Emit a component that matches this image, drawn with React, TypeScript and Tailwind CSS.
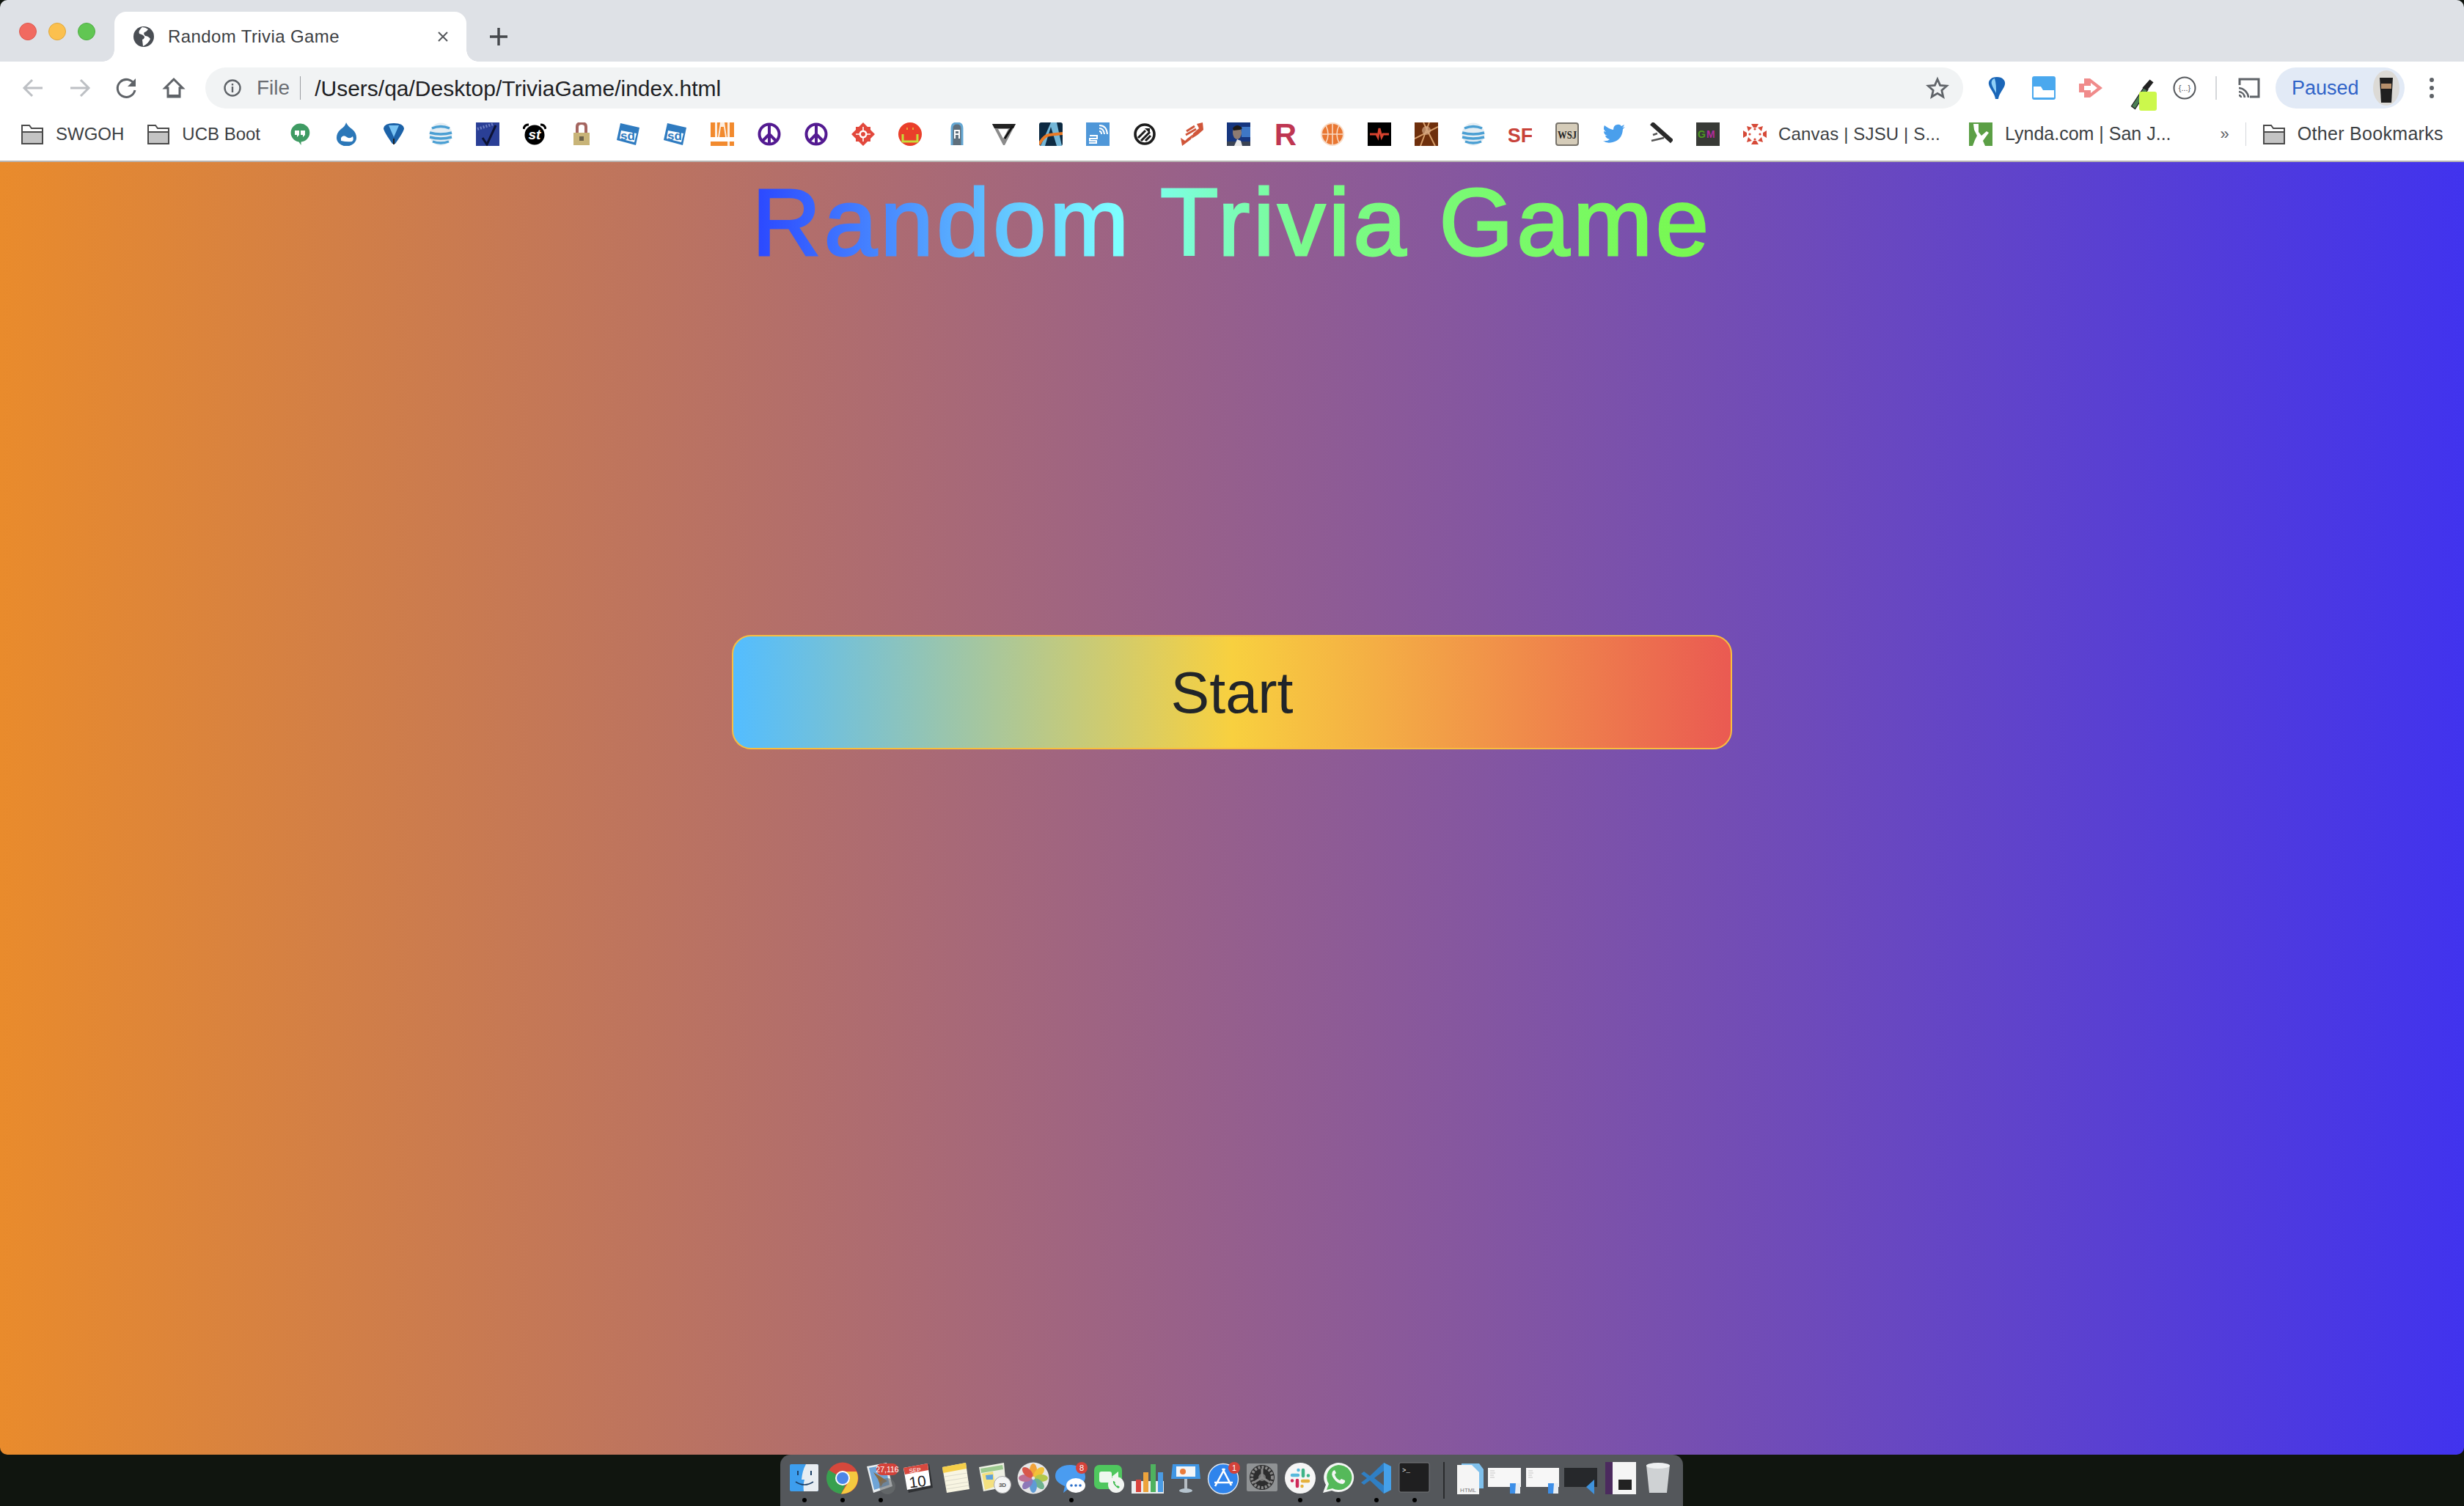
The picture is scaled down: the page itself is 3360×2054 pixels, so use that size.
import { ReactNode } from "react";

const Ico = ({ children, size = 32 }: { children: ReactNode; size?: number }) => (
  <svg viewBox="0 0 32 32" width={size} height={size} className="shrink-0">
    {children}
  </svg>
);

const Peace = () => (
  <Ico>
    <circle cx="16" cy="16" r="13.5" fill="none" stroke="#531a91" strokeWidth="4" />
    <path d="M16 3v26M16 16 6 26M16 16l10 10" stroke="#531a91" strokeWidth="4" fill="none" />
  </Ico>
);

const Att = () => (
  <Ico>
    <circle cx="16" cy="16" r="15.5" fill="#e4edf3" />
    <path d="M4 8q12-5 24 0M1 14q15 4 30 0M1 20q15 4 30 0M5 26q11 4 22 0" stroke="#4a9fd3" strokeWidth="3.4" fill="none" />
  </Ico>
);

const Sd = () => (
  <Ico>
    <path d="M5 1 31 7 26 31 0 24z" fill="#2f7bc0" />
    <path d="M6 11 27 15 24 27 4 22z" fill="#fff" />
    <text x="5" y="24" fontSize="17" fontWeight="700" fill="#2f7bc0" fontFamily="Liberation Sans, sans-serif">sd</text>
  </Ico>
);

const Balloon = () => (
  <Ico>
    <path d="M2 8Q3 1 16 1t14 7q0 4-12 21h-4Q2 12 2 8z" fill="#1c62a8" />
    <path d="M9 4h14L16 20z" fill="#79c4f4" />
    <path d="M15 22h2v8h-2z" fill="#222" />
  </Ico>
);

const Pin = () => (
  <Ico>
    <path d="M16 1c8 0 12 5 11 10-1 6-8 12-9 20h-4C13 23 6 17 5 11 4 6 8 1 16 1z" fill="#1a66b8" />
    <path d="M13 3c-4 1-5 5-4 8 1 4 4 8 6 12 0-7 0-14-2-20z" fill="#8fd0f7" />
  </Ico>
);

const Folder = () => (
  <svg viewBox="0 0 32 32" width="32" height="32" className="shrink-0">
    <path d="M2 4h10l3 4h15v21H2z" fill="#fff" stroke="#4a4a4a" strokeWidth="2" />
    <path d="M3 13h26v15H3z" fill="#c4c4c4" />
    <path d="M2 13h28" stroke="#4a4a4a" strokeWidth="2" />
  </svg>
);

const favicons = [
  <Ico key="hangouts">
    <path d="M16 1.5a12.5 12.5 0 0 1 1.5 25V31l-3-4.6A12.5 12.5 0 0 1 16 1.5z" fill="#3f9b63" />
    <path d="M9 11h6v6l-3 3v-3H9zM17 11h6v6l-3 3v-3h-3z" fill="#fff" />
  </Ico>,
  <Ico key="drupal">
    <path d="M15 0q2 5 8 9 6 5 6 12a13 11 0 0 1-27 0q0-7 6-12 6-4 7-9z" fill="#2b77b8" />
    <path d="M8 21q3-5 8-1 4 3 8-1 2 5-1 7-7 1-15-1z" fill="#fff" />
  </Ico>,
  <Balloon key="balloon" />,
  <Att key="att" />,
  <Ico key="check">
    <rect width="32" height="32" fill="#2a3f96" />
    <path d="M2 9 24 2" stroke="#6d7ec2" strokeWidth="4" strokeDasharray="2 2" />
    <path d="M9 21l6 9L27 4" stroke="#0c1233" strokeWidth="3" fill="none" />
  </Ico>,
  <Ico key="st">
    <circle cx="16" cy="17" r="13.5" fill="#000" />
    <path d="M1 9q1-6 7-6M31 9q-1-6-7-6" stroke="#000" strokeWidth="3" fill="none" />
    <text x="16" y="23" textAnchor="middle" fontSize="19" fontWeight="700" fontStyle="italic" fill="#fff" fontFamily="Liberation Sans, sans-serif">st</text>
  </Ico>,
  <Ico key="lock">
    <path d="M10 14V6q0-5 6-5t6 5v8" stroke="#a4655f" strokeWidth="4" fill="none" />
    <rect x="5" y="14" width="22" height="17" fill="#c8b478" />
    <rect x="13" y="19" width="6" height="6" fill="#6c624a" />
  </Ico>,
  <Sd key="sd1" />,
  <Sd key="sd2" />,
  <Ico key="ai">
    <rect width="32" height="32" fill="#f28a2e" />
    <path d="M6 0h3v20H6zM13 0h6l3 20h-2L18 6h-4l-2 14h-2zM23 0h3v32h-3z" fill="#fff" opacity=".85" />
    <path d="M0 20h32v6H0z" fill="#fff" />
  </Ico>,
  <Peace key="peace1" />,
  <Peace key="peace2" />,
  <Ico key="target">
    <path d="M16 0l6 6h4v4l6 6-6 6v4h-4l-6 6-6-6H6v-4l-6-6 6-6V6h4z" fill="#e2483c" />
    <circle cx="16" cy="16" r="5.5" fill="#fff" />
    <path d="M16 6v20M6 16h20" stroke="#fff" strokeWidth="1.6" />
    <circle cx="16" cy="16" r="3" fill="#e2483c" />
  </Ico>,
  <Ico key="smile">
    <circle cx="16" cy="16" r="16" fill="#ea3f2a" />
    <path d="M6 16v10h20V16" stroke="#c7dc3a" strokeWidth="3" fill="none" />
    <path d="M12 7v3M20 7v3" stroke="#e9a23a" strokeWidth="2" />
  </Ico>,
  <Ico key="tower">
    <path d="M9 31V8q0-7 7-7t7 7v23" fill="#5f6f7c" stroke="#65a8d4" strokeWidth="3" />
    <path d="M13 22V11h6v5h-6M19 16v6" stroke="#fff" strokeWidth="2" fill="none" />
  </Ico>,
  <Ico key="v">
    <path d="M0 2h32L17 31h-2z" fill="#8b8b8b" />
    <path d="M8 9h14l-7 13z" fill="#fff" />
    <path d="M0 2h32l-3 6H3z" fill="#222" />
    <path d="M28 5 17 22" stroke="#111" strokeWidth="3" />
  </Ico>,
  <Ico key="arch">
    <rect width="32" height="32" rx="3" fill="#0d2a42" />
    <path d="M16 0h8l7 32H24L16 6 8 32H2z" fill="#74b7d8" />
    <path d="M0 30q6-12 14-13t18-2" stroke="#ea7a26" strokeWidth="4" fill="none" />
  </Ico>,
  <Ico key="ewifi">
    <rect width="32" height="32" fill="#4f97d8" />
    <path d="M5 18h10v4H5v3h9v3H4M18 4q10 0 11 12M18 8q6 0 7 8M18 12q3 0 3 4" stroke="#fff" strokeWidth="2" fill="none" />
  </Ico>,
  <Ico key="pitchfork">
    <circle cx="16" cy="16" r="13" fill="#fff" stroke="#1c1c1c" strokeWidth="3.6" />
    <path d="M7 21 17 11M11 25 23 13M17 25l7-7" stroke="#1c1c1c" strokeWidth="3" />
    <path d="M16 8h7v7z" fill="#1c1c1c" />
  </Ico>,
  <Ico key="arrows">
    <path d="M1 21l2 11 12-9 3-7-8 6-3 3zM31 0l1 10-8 7-8 5 2-7 8-7-3-6z" fill="#d0563a" />
    <path d="M9 12l11-7M8 17l14-8" stroke="#d0563a" strokeWidth="3" />
  </Ico>,
  <Ico key="man">
    <rect width="32" height="32" fill="#16367f" />
    <rect x="20" y="6" width="12" height="14" fill="#3e77c6" />
    <path d="M0 26h32v6H0z" fill="#3a4354" />
    <ellipse cx="14" cy="14" rx="6" ry="9" fill="#8d7b72" />
    <path d="M8 8q6-8 13 0l-3 2-9 1z" fill="#1d1a18" />
    <path d="M10 32l4-9 5 2 2 7z" fill="#e8e8e8" />
  </Ico>,
  <svg key="r" viewBox="0 0 32 32" width="32" height="32" className="shrink-0 overflow-visible">
    <text x="16" y="31" textAnchor="middle" fontSize="42" fontWeight="700" fill="#bf3652" fontFamily="Liberation Sans, sans-serif">R</text>
  </svg>,
  <Ico key="basket">
    <circle cx="16" cy="16" r="15" fill="#e97732" stroke="#f8dcc8" strokeWidth="2" />
    <path d="M1 16h30M16 1v30M7 4q6 12 0 24M25 4q-6 12 0 24" stroke="#f9d9c3" strokeWidth="1.6" fill="none" />
  </Ico>,
  <Ico key="pulse">
    <rect width="32" height="32" fill="#000" />
    <path d="M3 16h9l2 4 2-12 3 12 2-4h8" stroke="#d8432f" strokeWidth="3" fill="none" />
  </Ico>,
  <Ico key="brown">
    <rect width="32" height="32" fill="#6e2f0c" />
    <path d="M20 0 8 32M12 0l16 32M0 22 32 6" stroke="#d49b68" strokeWidth="2" />
    <circle cx="16" cy="11" r="6" fill="#d6a986" opacity=".7" />
  </Ico>,
  <Att key="att2" />,
  <svg key="sf" viewBox="0 0 32 32" width="32" height="32" className="shrink-0">
    <text x="16" y="27" textAnchor="middle" fontSize="27" fontWeight="700" fill="#c8423a" fontFamily="Liberation Sans, sans-serif">SF</text>
  </svg>,
  <svg key="wsj" viewBox="0 0 32 32" width="32" height="32" className="shrink-0">
    <rect x="1" y="1" width="30" height="30" rx="3" fill="#d5ccb9" stroke="#77736b" strokeWidth="2" />
    <text x="16" y="22" textAnchor="middle" fontSize="14" fontWeight="700" fill="#222" fontFamily="Liberation Serif, serif" textLength="26" lengthAdjust="spacingAndGlyphs">WSJ</text>
  </svg>,
  <Ico key="twitter">
    <path d="M31 6q-2 1-4 1 2-1 3-4-2 1-4 2-2-3-6-2-5 1-5 7Q9 9 3 4q-3 5 2 9l-3-1q0 5 5 6H4q1 4 6 5-3 3-9 2 5 4 13 2 13-3 14-18z" fill="#4a9fec" />
  </Ico>,
  <Ico key="pen">
    <path d="M3 1 31 26" stroke="#2a2a2a" strokeWidth="6" />
    <path d="M3 25 20 21M5 17l6-2" stroke="#555" strokeWidth="2.6" />
  </Ico>,
  <svg key="gm" viewBox="0 0 32 32" width="32" height="32" className="shrink-0">
    <rect width="32" height="32" fill="#383a36" />
    <text x="2" y="21" fontSize="14" fontWeight="700" fill="#4e9a22" fontFamily="Liberation Sans, sans-serif">G</text>
    <text x="14" y="21" fontSize="14" fontWeight="700" fill="#b12b9c" fontFamily="Liberation Sans, sans-serif">M</text>
  </svg>,
  <Ico key="canvas">
    <path d="M11 2h10l-3 5h-4zM11 30h10l-3-5h-4zM0 11v10l5-3v-4zM32 11v10l-5-3v-4zM5 5l7 2-5 5zM27 5l-7 2 5 5zM5 27l7-2-5-5zM27 27l-7-2 5-5z" fill="#d64a38" />
    <circle cx="16" cy="9" r="1.6" fill="#d64a38" />
    <circle cx="16" cy="23" r="1.6" fill="#d64a38" />
    <circle cx="9" cy="16" r="1.6" fill="#d64a38" />
    <circle cx="23" cy="16" r="1.6" fill="#d64a38" />
  </Ico>,
];

const DockBox = ({ children }: { children: ReactNode }) => (
  <svg viewBox="0 0 44 44" width="44" height="44" className="overflow-visible">
    {children}
  </svg>
);

const sans = "Liberation Sans, sans-serif";

const dockApps: { key: string; dot?: boolean; icon: ReactNode }[] = [
  {
    key: "finder",
    dot: true,
    icon: (
      <DockBox>
        <rect x="2" y="3" width="39" height="37" rx="2" fill="#3d9eee" />
        <path d="M24 3h15a2 2 0 0 1 2 2v33a2 2 0 0 1-2 2H21q-1-9 1-16h-4q1-12 6-21z" fill="#e8edf2" />
        <path d="M13 12v6M31 12v6" stroke="#1c3f66" strokeWidth="2" />
        <path d="M10 27q12 8 24 0" stroke="#1c3f66" strokeWidth="1.6" fill="none" />
      </DockBox>
    ),
  },
  {
    key: "chrome",
    dot: true,
    icon: (
      <DockBox>
        <circle cx="22" cy="22" r="21.5" fill="#d5483c" />
        <path d="M22 22 3 11A21.5 21.5 0 0 0 20 43.4L30 23z" fill="#38a04f" />
        <path d="M22 13h19a21.5 21.5 0 0 1-21 30.4L32 24z" fill="#f5c93f" />
        <circle cx="22" cy="22" r="10" fill="#fff" />
        <circle cx="22" cy="22" r="8" fill="#4c86e8" />
      </DockBox>
    ),
  },
  {
    key: "mail",
    dot: true,
    icon: (
      <DockBox>
        <path d="M3 6 30 1l8 32-26 9z" fill="#eaeef0" />
        <path d="M6 8 28 4l6 27-21 7z" fill="#6fa4d6" />
        <path d="M12 14l10 6 9 6-6 3-3 5-4-11z" fill="#8d6a3c" />
        <circle cx="31" cy="33" r="11" fill="#6d6f72" opacity=".6" />
        <rect x="16" y="2" width="30" height="16" rx="8" fill="#d4423a" />
        <text x="31" y="14" textAnchor="middle" fontSize="10.5" fill="#fff" fontFamily={sans}>27,116</text>
      </DockBox>
    ),
  },
  {
    key: "calendar",
    icon: (
      <DockBox>
        <path d="M2 9 36 3l5 32-33 7z" fill="#2f3134" />
        <path d="M1 8 34 2l4 30-32 6z" fill="#fff" />
        <path d="M1 8 34 2l1 9-32 6z" fill="#d8483e" />
        <text x="17" y="14" textAnchor="middle" fontSize="8" fill="#fff" fontFamily={sans} transform="rotate(-7 17 14)">SEP</text>
        <text x="21" y="34" textAnchor="middle" fontSize="21" fill="#222" fontFamily={sans} transform="rotate(-7 21 34)">10</text>
      </DockBox>
    ),
  },
  {
    key: "notes",
    icon: (
      <DockBox>
        <path d="M2 7 34 1l5 36-31 5z" fill="#f8f5e2" />
        <path d="M2 7 34 1l1 8-32 6z" fill="#f6cf4a" />
        <path d="M5 20l31-5M6 26l31-5M7 32l31-5M7 37l31-5" stroke="#dcdacb" strokeWidth="1" />
      </DockBox>
    ),
  },
  {
    key: "maps",
    icon: (
      <DockBox>
        <path d="M0 7 34 1l3 33-31 6z" fill="#eef0e4" />
        <path d="M2 9 32 4l1 6-30 5z" fill="#9cc98f" />
        <path d="M4 16l15-3 4 20-15 5z" fill="#f4e07f" />
        <path d="M9 18l10-1v7H10z" fill="#5ea1dc" />
        <circle cx="32" cy="31" r="11.5" fill="#f4f5f5" stroke="#aaa" />
        <text x="32" y="34" textAnchor="middle" fontSize="8" fontWeight="700" fill="#555" fontFamily={sans}>3D</text>
      </DockBox>
    ),
  },
  {
    key: "photos",
    icon: (
      <DockBox>
        <circle cx="22" cy="22" r="21.5" fill="#e6e6e6" />
        <ellipse cx="22" cy="11" rx="5" ry="9" fill="#f2a33a" />
        <ellipse cx="22" cy="11" rx="5" ry="9" fill="#f2c13a" transform="rotate(45 22 22)" />
        <ellipse cx="22" cy="11" rx="5" ry="9" fill="#b2c84c" transform="rotate(90 22 22)" />
        <ellipse cx="22" cy="11" rx="5" ry="9" fill="#6fb28f" transform="rotate(135 22 22)" />
        <ellipse cx="22" cy="11" rx="5" ry="9" fill="#5f9bd5" transform="rotate(180 22 22)" />
        <ellipse cx="22" cy="11" rx="5" ry="9" fill="#8d78b8" transform="rotate(225 22 22)" />
        <ellipse cx="22" cy="11" rx="5" ry="9" fill="#bd6f93" transform="rotate(270 22 22)" />
        <ellipse cx="22" cy="11" rx="5" ry="9" fill="#d8574b" transform="rotate(315 22 22)" />
      </DockBox>
    ),
  },
  {
    key: "messages",
    dot: true,
    icon: (
      <DockBox>
        <path d="M20 4c11 0 21 6 21 16 0 9-9 15-21 15l-9 7 2-9C6 30 0 26 0 19 0 10 9 4 20 4z" fill="#4a9cf0" />
        <ellipse cx="28" cy="32" rx="13" ry="10" fill="#fff" />
        <circle cx="22" cy="32" r="1.8" fill="#2b6fc9" />
        <circle cx="28" cy="32" r="1.8" fill="#2b6fc9" />
        <circle cx="34" cy="32" r="1.8" fill="#2b6fc9" />
        <circle cx="36" cy="8" r="8" fill="#d4423a" />
        <text x="36" y="12" textAnchor="middle" fontSize="11" fill="#fff" fontFamily={sans}>8</text>
      </DockBox>
    ),
  },
  {
    key: "facetime",
    icon: (
      <DockBox>
        <rect x="1" y="4" width="38" height="33" rx="7" fill="#4fc75e" />
        <rect x="8" y="13" width="17" height="15" rx="3" fill="#eef8ef" />
        <path d="M25 20l9-7v15z" fill="#eef8ef" />
        <circle cx="31" cy="31" r="11" fill="#f2f5f2" />
        <path d="M27 26q-1 5 7 10l2-2-3-2-1 1-3-4 1-1-2-2z" fill="#3cbb4f" />
      </DockBox>
    ),
  },
  {
    key: "numbers",
    icon: (
      <DockBox>
        <path d="M0 26h44v17H0z" fill="#eceff0" />
        <rect x="6" y="24" width="7" height="17" fill="#d9433c" />
        <rect x="16" y="14" width="7" height="27" fill="#eda33c" />
        <rect x="26" y="3" width="7" height="38" fill="#4fb25f" />
        <rect x="36" y="14" width="7" height="27" fill="#4a9be4" />
      </DockBox>
    ),
  },
  {
    key: "keynote",
    icon: (
      <DockBox>
        <path d="M4 3h36l2 20H2z" fill="#3f96e4" />
        <rect x="9" y="6" width="26" height="14" fill="#f2f5f7" />
        <circle cx="18" cy="13" r="4" fill="#e97b3a" />
        <path d="M20 23h4v15h-4z" fill="#b6bdc3" />
        <ellipse cx="22" cy="39" rx="9" ry="3" fill="#b6c4cf" />
      </DockBox>
    ),
  },
  {
    key: "appstore",
    icon: (
      <DockBox>
        <circle cx="21" cy="23" r="20.5" fill="#2f84ec" stroke="#e4eaf0" strokeWidth="1.4" />
        <path d="M23 9 10 33M20 9l12 23M9 28h25" stroke="#fff" strokeWidth="2.6" fill="none" />
        <circle cx="36" cy="8" r="8" fill="#d4423a" />
        <text x="36" y="12" textAnchor="middle" fontSize="11" fill="#fff" fontFamily={sans}>1</text>
      </DockBox>
    ),
  },
  {
    key: "prefs",
    icon: (
      <DockBox>
        <rect x="1" y="2" width="42" height="38" rx="2" fill="#8f9294" />
        <circle cx="22" cy="21" r="17" fill="#2d2d2e" />
        <circle cx="22" cy="21" r="14" fill="none" stroke="#888" strokeWidth="4" strokeDasharray="3 2" />
        <circle cx="22" cy="21" r="5" fill="#777" />
        <path d="M22 21V9M22 21 11 28M22 21l11 7" stroke="#888" strokeWidth="3" />
      </DockBox>
    ),
  },
  {
    key: "slack",
    dot: true,
    icon: (
      <DockBox>
        <circle cx="22" cy="22" r="21" fill="#f6f6f6" />
        <path d="M11 18h8M19.500 11v.1" stroke="#58b9dc" strokeWidth="4.500" strokeLinecap="round" fill="none" />
        <path d="M26 11v8M33 18.500h-.1" stroke="#3fb488" strokeWidth="4.500" strokeLinecap="round" fill="none" />
        <path d="M33 26h-8M24.500 33v-.1" stroke="#e5b13e" strokeWidth="4.500" strokeLinecap="round" fill="none" />
        <path d="M18 33v-8M11 25.500h.1" stroke="#cf2a5a" strokeWidth="4.500" strokeLinecap="round" fill="none" />
      </DockBox>
    ),
  },
  {
    key: "whatsapp",
    dot: true,
    icon: (
      <DockBox>
        <path d="M22 1a21 20 0 1 1-9 38L1 42l4-11A21 20 0 0 1 22 1z" fill="#f4f6f4" />
        <path d="M22 4a18 17 0 1 1-8 32l-8 2 3-8A18 17 0 0 1 22 4z" fill="#55b95a" />
        <path d="M15 12q-4 4 1 11t12 7q4-2 3-5l-5-2-2 2q-5-2-7-8l2-2-2-4z" fill="#f4f6f4" />
      </DockBox>
    ),
  },
  {
    key: "vscode",
    dot: true,
    icon: (
      <DockBox>
        <path d="M32 1 42 6v32l-10 5L13 25l-8 6-4-3 8-6-8-6 4-3 8 6z" fill="#2f7fc4" />
        <path d="M32 1 42 6v32l-10 5z" fill="#45a0e8" />
        <path d="M32 12 19 22l13 10z" fill="#54585c" />
      </DockBox>
    ),
  },
  {
    key: "terminal",
    dot: true,
    icon: (
      <DockBox>
        <rect x="1" y="1" width="41" height="40" rx="2" fill="#1f1f20" stroke="#77797c" />
        <text x="5" y="14" fontSize="9" fill="#f0f0f0" fontFamily="Liberation Mono, monospace">&gt;_</text>
      </DockBox>
    ),
  },
];

const Thumb = ({ children }: { children?: ReactNode }) => (
  <svg viewBox="0 0 46 46" width="46" height="46" className="overflow-visible">
    <rect x="0" y="8" width="45" height="26" fill="#f7f7f7" />
    <path d="M3 12h6M3 15h7M3 18h5M3 21h6" stroke="#bbb" strokeWidth=".8" />
    {children}
  </svg>
);

const SmallFinder = () => (
  <g>
    <rect x="30" y="29" width="14" height="14" fill="#3d8fe8" />
    <path d="M38 29h6v14h-7z" fill="#e8edf2" />
  </g>
);

export default function App() {
  return (
    <div className="w-[3360px] h-[2054px] bg-[#10150f] flex flex-col overflow-hidden font-['Liberation_Sans',sans-serif]">
      <div className="h-[1984px] rounded-[10px] overflow-hidden flex flex-col shrink-0">
        {/* tab strip */}
        <div className="h-[84px] bg-[#dee1e6] flex items-end shrink-0">
          <div className="w-[156px] h-[86px] flex items-start pl-[26px] pt-[31px] gap-4 self-start">
            <span className="w-6 h-6 rounded-full bg-[#f16a60] border border-[#dc5a50]" />
            <span className="w-6 h-6 rounded-full bg-[#fbc04e] border border-[#e0a83c]" />
            <span className="w-6 h-6 rounded-full bg-[#61c653] border border-[#50ad45]" />
          </div>
          <div className="relative w-[480px] h-[68px] bg-white rounded-t-[16px] flex items-center pl-[26px] pr-[24px] shrink-0">
            <span className="absolute -left-4 bottom-0 w-4 h-4 bg-[radial-gradient(circle_at_0_0,transparent_15.5px,white_16px)]" />
            <span className="absolute -right-4 bottom-0 w-4 h-4 bg-[radial-gradient(circle_at_100%_0,transparent_15.5px,white_16px)]" />
            <svg viewBox="0 0 28 28" width="28" height="28" className="shrink-0">
              <circle cx="14" cy="14" r="14" fill="#4a4e54" />
              <path d="M12 1q-6 5-4 9 5 1 7 4 0 3-3 4l1 9q7-3 10-10-3-4-7-4-3-3-1-5 3-1 5-4-4-3-8-3z" fill="#fff" />
            </svg>
            <span className="ml-[19px] text-[24px] tracking-[0.4px] text-[#3c4043] whitespace-nowrap">Random Trivia Game</span>
            <svg viewBox="0 0 16 16" width="16" height="16" className="ml-auto shrink-0">
              <path d="M2 2l12 12M14 2 2 14" stroke="#55585c" strokeWidth="2" />
            </svg>
          </div>
          <svg viewBox="0 0 24 24" width="24" height="24" className="ml-[32px] mb-[22px] shrink-0">
            <path d="M12 0v24M0 12h24" stroke="#45484c" strokeWidth="3.4" />
          </svg>
        </div>

        {/* toolbar */}
        <div className="h-[64px] bg-white flex items-start pt-2 shrink-0">
          <div className="w-[280px] h-[56px] flex items-center pl-[29px] gap-[32px] shrink-0">
            <svg viewBox="0 0 32 32" width="32" height="32" className="shrink-0">
              <path d="M29 16H4M15 5 4 16l11 11" stroke="#bdc0c4" strokeWidth="3" fill="none" />
            </svg>
            <svg viewBox="0 0 32 32" width="32" height="32" className="shrink-0">
              <path d="M3 16h25M17 5l11 11-11 11" stroke="#bdc0c4" strokeWidth="3" fill="none" />
            </svg>
            <svg viewBox="0 0 32 32" width="32" height="32" className="shrink-0">
              <path d="M26 11a12 12 0 1 0 1 8" stroke="#5f6368" strokeWidth="3" fill="none" />
              <path d="M28 3v11H17z" fill="#5f6368" />
            </svg>
            <svg viewBox="0 0 32 32" width="32" height="32" className="shrink-0">
              <path d="M16 4 4 16h4v12h16V16h4z" stroke="#5f6368" strokeWidth="3" fill="none" />
              <path d="M8 25h16v3H8z" fill="#5f6368" />
            </svg>
          </div>
          <div className="w-[2397px] h-[56px] bg-[#f1f3f4] rounded-full flex items-center pl-[25px] pr-[19px] shrink-0">
            <svg viewBox="0 0 24 24" width="24" height="24" className="shrink-0 mr-[21px]">
              <circle cx="12" cy="12" r="10.5" stroke="#5f6368" strokeWidth="2.4" fill="none" />
              <path d="M12 10v8M12 6v2.4" stroke="#5f6368" strokeWidth="2.4" />
            </svg>
            <span className="text-[28px] text-[#6a6d72]">File</span>
            <span className="w-px h-[32px] bg-[#9a9da1] ml-[14px] mr-[19px]" />
            <span className="text-[30px] text-[#202124] whitespace-nowrap">/Users/qa/Desktop/TriviaGame/index.html</span>
            <svg viewBox="0 0 32 32" width="32" height="32" className="ml-auto shrink-0">
              <path d="M16 4l3.6 8.4 9 .8-6.8 6 2 8.8-7.8-4.7L8.200 28l2-8.800-6.800-6 9-.8z" stroke="#5f6368" strokeWidth="2.800" fill="none" />
            </svg>
          </div>
          <div className="flex items-center h-[56px] pl-[30px] gap-[32px] shrink-0">
            <Pin />
            <svg viewBox="0 0 32 32" width="32" height="32" className="shrink-0">
              <rect width="32" height="32" rx="3" fill="#4aa8ee" />
              <path d="M2 14h10l3 5h15v10H2z" fill="#fff" />
            </svg>
            <svg viewBox="0 0 32 32" width="32" height="32" className="shrink-0">
              <path d="M0 10h7V3h8l17 13-17 13H7v-7H0z" fill="#f08b8b" />
              <path d="M7 13h9V9l9 7-9 7v-4H7z" fill="#fff" />
            </svg>
            <div className="relative w-[32px] h-[32px] shrink-0">
              <svg viewBox="0 0 32 32" width="40" height="44" className="overflow-visible">
                <path d="M6 31 20 10l4 3L10 34z" fill="#4c7f55" stroke="#222" strokeWidth="1" />
                <path d="M18 11 26 2l4 3-7 9z" fill="#222" />
              </svg>
              <span className="absolute left-[18px] top-[21px] w-6 h-[26px] rounded-[3px] bg-[#ccf84c]" />
            </div>
            <svg viewBox="0 0 32 32" width="32" height="32" className="shrink-0">
              <circle cx="16" cy="16" r="14.5" fill="#fff" stroke="#55585c" strokeWidth="2" />
              <text x="16" y="20" textAnchor="middle" fontSize="11" fill="#55585c" fontFamily={sans}>{"{...}"}</text>
            </svg>
            <span className="w-[2px] h-[32px] bg-[#d5d7da] -ml-[6px] -mr-[4px]" />
            <svg viewBox="0 0 32 32" width="32" height="32" className="shrink-0">
              <path d="M3 12V4h26v24H17" stroke="#5f6368" strokeWidth="3" fill="none" />
              <path d="M2 16a14 14 0 0 1 13 13M2 21a9 9 0 0 1 8 8M2 26a3 3 0 0 1 3 3" stroke="#5f6368" strokeWidth="2.600" fill="none" />
            </svg>
            <div className="w-[176px] h-[56px] -ml-[12px] rounded-full bg-[#e2eaf6] flex items-center pl-[22px] pr-[7px] shrink-0">
              <span className="text-[27px] text-[#3164c8]">Paused</span>
              <svg viewBox="0 0 36 48" width="36" height="48" className="ml-auto shrink-0">
                <ellipse cx="18" cy="24" rx="18" ry="24" fill="#dcdad6" />
                <path d="M9 10h18l-2 34H11z" fill="#1f1f1f" />
                <rect x="11" y="18" width="14" height="7" fill="#b58f6b" />
              </svg>
            </div>
            <div className="flex flex-col gap-[5px] ml-[2px] shrink-0">
              <span className="w-[6px] h-[6px] rounded-full bg-[#5f6368]" />
              <span className="w-[6px] h-[6px] rounded-full bg-[#5f6368]" />
              <span className="w-[6px] h-[6px] rounded-full bg-[#5f6368]" />
            </div>
          </div>
        </div>

        {/* bookmarks */}
        <div className="h-[73px] bg-white border-b-2 border-[#b9b6b4] flex items-center pl-[28px] pb-[2px] text-[24px] text-[#3c4043] shrink-0">
          <div className="flex items-center gap-4">
            <Folder />
            <span>SWGOH</span>
          </div>
          <div className="flex items-center gap-4 ml-[31px]">
            <Folder />
            <span>UCB Boot</span>
          </div>
          <div className="flex items-center gap-[32px] ml-[38px]">{favicons}</div>
          <span className="ml-4 w-[220px] whitespace-nowrap tracking-[0.15px]">Canvas | SJSU | S...</span>
          <svg viewBox="0 0 32 32" width="32" height="32" className="ml-[40px] shrink-0">
            <rect width="32" height="32" fill="#5b9f45" />
            <path d="M6 2h7v11l4 5 7-6 3 2-8 11 3 7H5l3-8 3-6-4-8z" fill="#fff" />
          </svg>
          <span className="ml-[17px] text-[25px] whitespace-nowrap">Lynda.com | San J...</span>
          <span className="ml-[67px] text-[22px] text-[#5f6368]">»</span>
          <span className="w-px h-[32px] bg-[#d5d7da] ml-[22px]" />
          <div className="flex items-center gap-4 ml-[22px]">
            <Folder />
            <span className="text-[25px] tracking-[0.3px] whitespace-nowrap">Other Bookmarks</span>
          </div>
        </div>

        {/* page */}
        <main className="flex-1 bg-[linear-gradient(to_right,#e98b2c,#4133ee)] flex flex-col items-center">
          <h1 className="mt-[17px] w-fit text-[130px] leading-none tracking-[4.500px] whitespace-nowrap text-transparent bg-clip-text [-webkit-text-stroke:3px_transparent] bg-[linear-gradient(to_right,#2a46ff_0%,#7dffff_38%,#7afb8a_58%,#78f84e_100%)]">
            Random Trivia Game
          </h1>
          <button className="mt-[498px] w-[1364px] h-[156px] rounded-[26px] border-2 border-[#f8bd3f] bg-[linear-gradient(to_right,#53bdff,#f8d03f_50%,#ea5a52)] pt-[3px] text-[79px] text-[#212529]">
            Start
          </button>
        </main>
      </div>

      {/* dock */}
      <div className="relative ml-[1064px] w-[1231px] flex-1 rounded-t-[14px] bg-[#54575b] flex items-start pt-[10px] pl-[11px]">
        <div className="flex gap-2">
          {dockApps.map((app) => (
            <div key={app.key} className="relative w-[44px] h-[44px]">
              {app.icon}
              {app.dot && <span className="absolute left-[19px] top-[49px] w-[6px] h-[6px] rounded-full bg-black" />}
            </div>
          ))}
        </div>
        <span className="w-[2px] h-[50px] bg-[#2b2c2e] ml-[17px]" />
        <div className="flex gap-[6px] ml-[17px]">
          <svg viewBox="0 0 36 44" width="36" height="44" className="shrink-0">
            <path d="M6 2h24l6 8v26H6z" fill="#7fc0ec" />
            <path d="M0 4h20l10 10v30H0z" fill="#f5f5f5" />
            <text x="15" y="41" textAnchor="middle" fontSize="8" fill="#777" fontFamily={sans}>HTML</text>
          </svg>
          <Thumb>
            <SmallFinder />
          </Thumb>
          <Thumb>
            <SmallFinder />
          </Thumb>
          <svg viewBox="0 0 46 46" width="46" height="46" className="shrink-0">
            <rect x="0" y="8" width="45" height="26" fill="#26282b" />
            <path d="M30 34l11-10v20z" fill="#3f92dc" />
          </svg>
          <svg viewBox="0 0 42 46" width="42" height="46" className="shrink-0 ml-[4px]">
            <rect x="0" y="0" width="42" height="44" fill="#f5f5f5" />
            <rect x="0" y="0" width="10" height="44" fill="#4b2a5e" />
            <rect x="18" y="24" width="18" height="14" fill="#222" />
          </svg>
          <svg viewBox="0 0 36 44" width="36" height="44" className="shrink-0 ml-[6px]">
            <path d="M2 4h32l-4 38H6z" fill="#cfd2d4" />
            <ellipse cx="18" cy="5" rx="16" ry="4" fill="#eef0f1" />
          </svg>
        </div>
      </div>
    </div>
  );
}
